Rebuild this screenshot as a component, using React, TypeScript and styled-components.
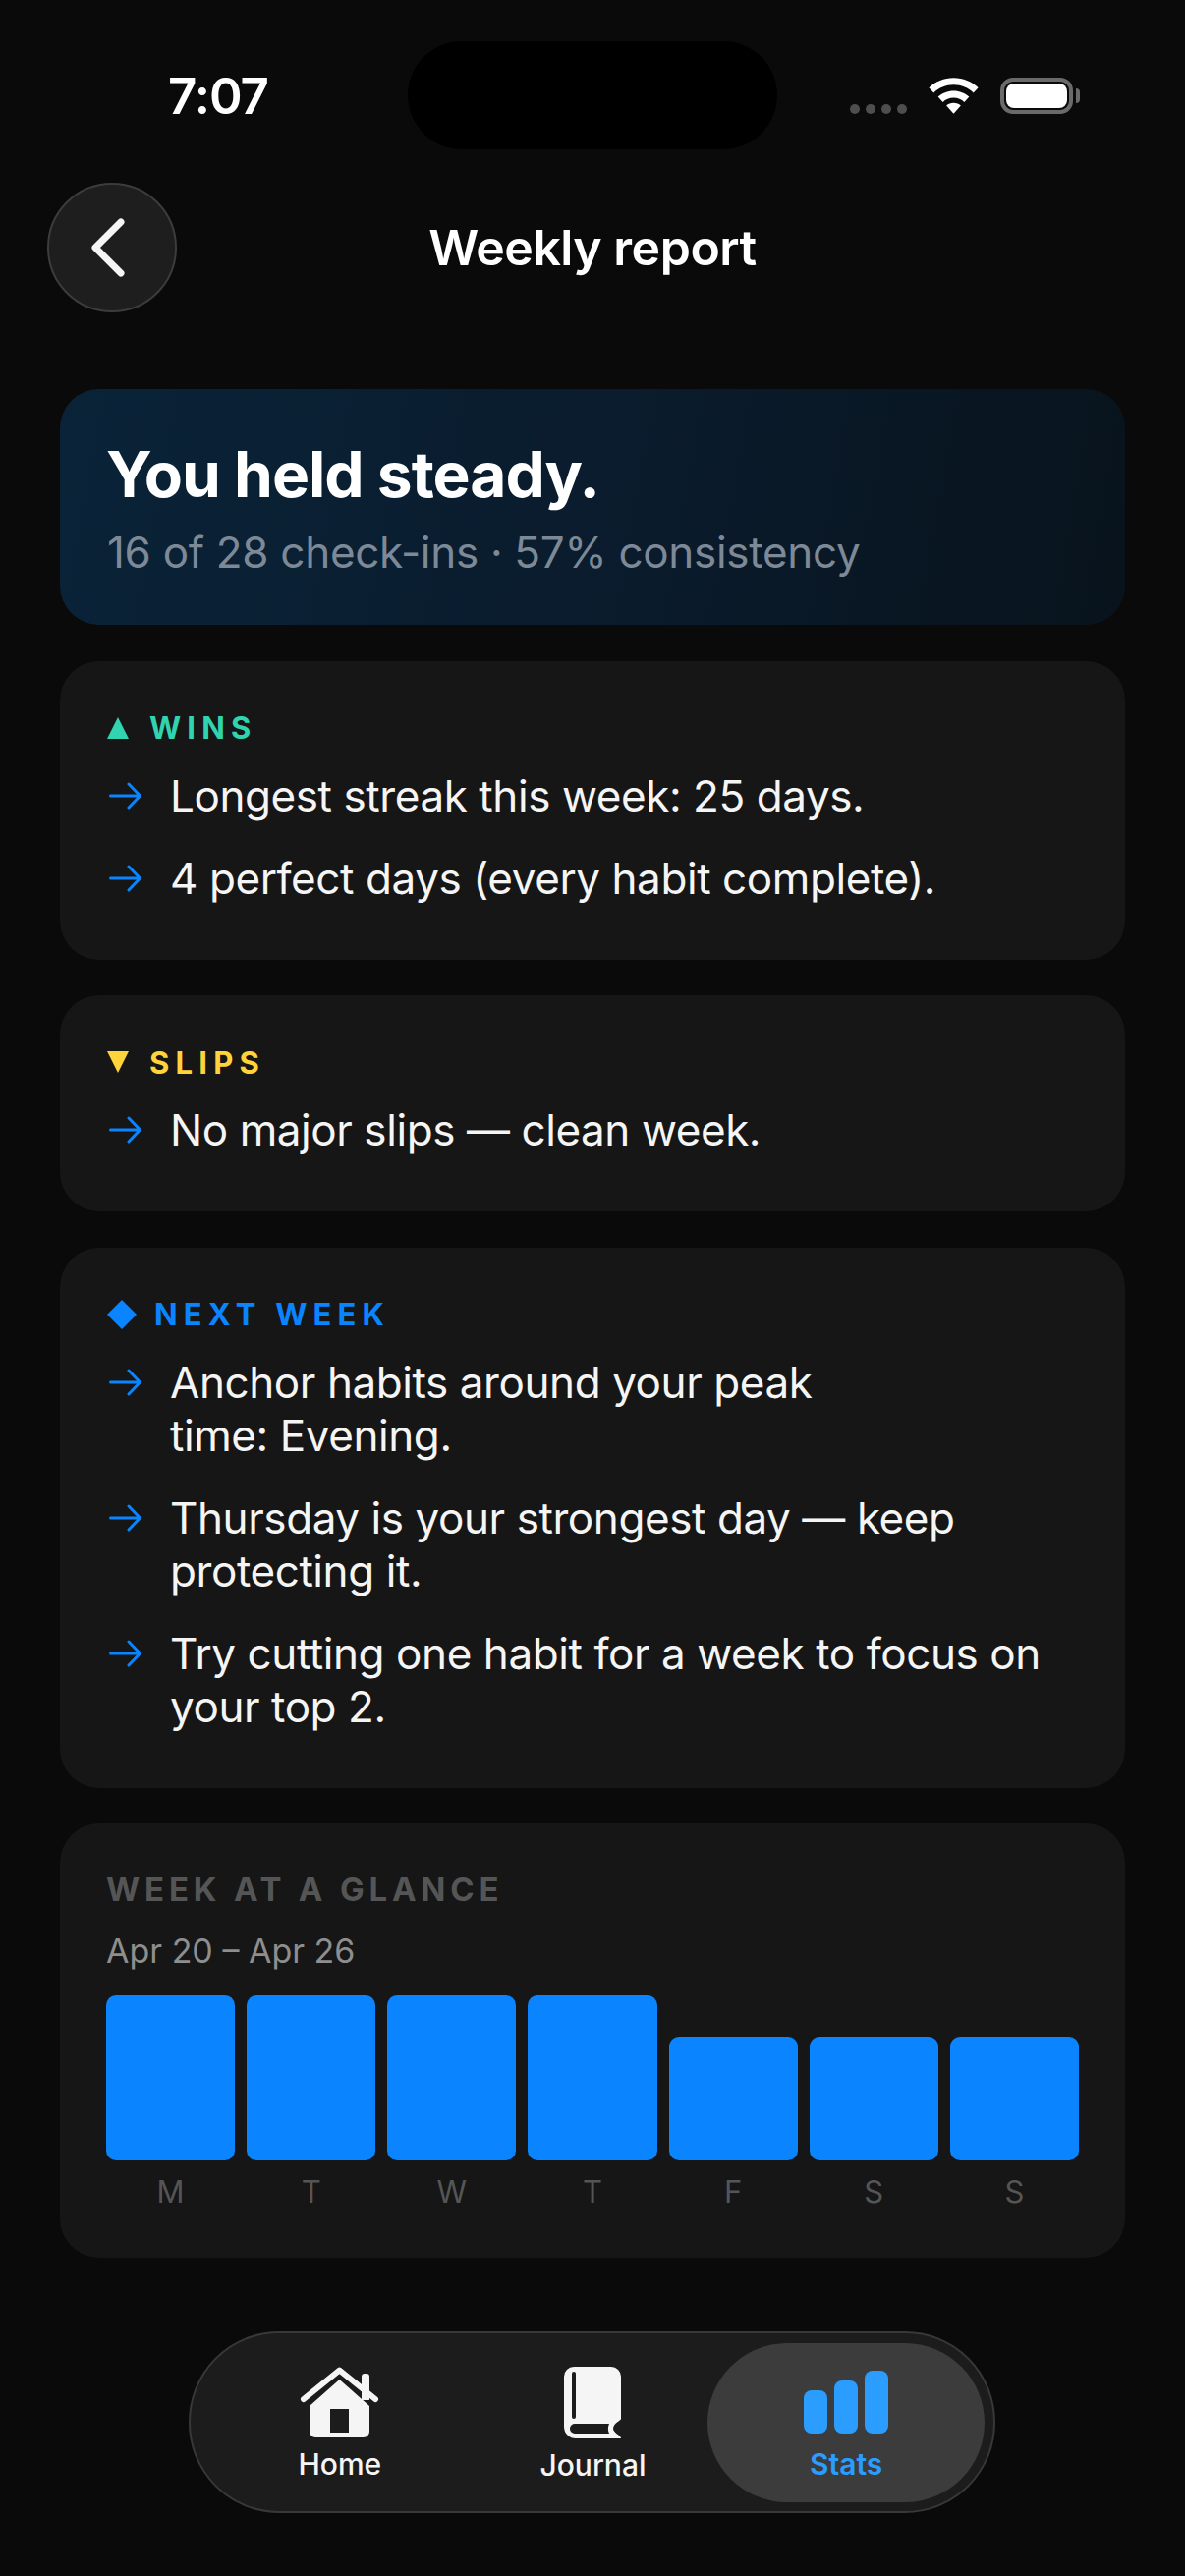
import React from "react";
import styled, { createGlobalStyle } from "styled-components";

const GlobalStyle = createGlobalStyle`
  html, body {
    margin: 0;
    padding: 0;
    background: #0a0a0a;
  }
  * {
    box-sizing: border-box;
  }
`;

const days = [
  { label: "M", height: 168 },
  { label: "T", height: 168 },
  { label: "W", height: 168 },
  { label: "T", height: 168 },
  { label: "F", height: 126 },
  { label: "S", height: 126 },
  { label: "S", height: 126 },
];

function Arrow() {
  return (
    <ArrowIcon viewBox="0 0 34 28" fill="none">
      <path
        d="M1.5 14H31M20 2l11.5 12L20 26"
        stroke="#0a84ff"
        strokeWidth="3"
        strokeLinecap="round"
        strokeLinejoin="round"
      />
    </ArrowIcon>
  );
}

function Bullet({ lines }: { lines: string[] }) {
  return (
    <Row>
      <Arrow />
      <RowText>
        {lines.map((line) => (
          <span key={line}>{line}</span>
        ))}
      </RowText>
    </Row>
  );
}

export default function App() {
  return (
    <Screen>
      <GlobalStyle />
      <StatusBar>
        <Time>7:07</Time>
        <Island />
        <StatusIcons>
          <Dots>
            <i />
            <i />
            <i />
            <i />
          </Dots>
          <svg width="51" height="37" viewBox="0 0 50 36">
            <path
              d="M25 0c9.500 0 18.200 3.700 24.600 9.800L44.800 15C39.600 10 32.700 7 25 7S10.400 10 5.200 15L.4 9.800C6.800 3.700 15.500 0 25 0z"
              fill="#fff"
            />
            <path
              d="M25 13c6 0 11.400 2.300 15.500 6.100l-4.800 5.200C33 21.700 29.200 20 25 20s-8 1.700-10.700 4.300l-4.800-5.200C13.600 15.300 19 13 25 13z"
              fill="#fff"
            />
            <path d="M25 25c2.800 0 5.300 1 7.200 2.700L25 36l-7.200-8.300C19.700 26 22.200 25 25 25z" fill="#fff" />
          </svg>
          <Battery>
            <BatteryFill />
          </Battery>
        </StatusIcons>
      </StatusBar>

      <Header>
        <BackButton>
          <svg width="36" height="60" viewBox="0 0 36 60" fill="none">
            <path
              d="M31 4L5 30l26 26"
              stroke="#f5f5f5"
              strokeWidth="7"
              strokeLinecap="round"
              strokeLinejoin="round"
            />
          </svg>
        </BackButton>
        <Title>Weekly report</Title>
      </Header>

      <Cards>
        <Hero>
          <HeroTitle>You held steady.</HeroTitle>
          <HeroSub>16 of 28 check-ins · 57% consistency</HeroSub>
        </Hero>

        <Card>
          <Label $color="#30d5b0" $gap={21}>
            <svg width="22" height="22" viewBox="0 0 22 22">
              <path d="M11 0l11 22H0z" fill="#30d5b0" />
            </svg>
            WINS
          </Label>
          <Rows>
            <Bullet lines={["Longest streak this week: 25 days."]} />
            <Bullet lines={["4 perfect days (every habit complete)."]} />
          </Rows>
        </Card>

        <Card>
          <Label $color="#ffd43b" $gap={21}>
            <svg width="22" height="22" viewBox="0 0 22 22">
              <path d="M0 0h22L11 22z" fill="#ffd43b" />
            </svg>
            SLIPS
          </Label>
          <Rows>
            <Bullet lines={["No major slips — clean week."]} />
          </Rows>
        </Card>

        <Card>
          <Label $color="#0a84ff" $gap={18}>
            <svg width="30" height="30" viewBox="0 0 28 28">
              <path d="M14 0l14 14-14 14L0 14z" fill="#0a84ff" />
            </svg>
            NEXT WEEK
          </Label>
          <Rows>
            <Bullet lines={["Anchor habits around your peak", "time: Evening."]} />
            <Bullet lines={["Thursday is your strongest day — keep", "protecting it."]} />
            <Bullet lines={["Try cutting one habit for a week to focus on", "your top 2."]} />
          </Rows>
        </Card>

        <GlanceCard>
          <GlanceTitle>WEEK AT A GLANCE</GlanceTitle>
          <DateRange>Apr 20 – Apr 26</DateRange>
          <Chart>
            {days.map((day, i) => (
              <Day key={i}>
                <BarSlot>
                  <Bar style={{ height: day.height }} />
                </BarSlot>
                <DayLabel>{day.label}</DayLabel>
              </Day>
            ))}
          </Chart>
        </GlanceCard>
      </Cards>

      <TabBar>
        <Tab>
          <svg width="81" height="72" viewBox="0 0 81 72">
            <path d="M63 10a3 3 0 0 1 3-3h2a3 3 0 0 1 3 3v24h-8z" fill="#f5f5f5" />
            <path d="M40.500 13L71 40v26a6 6 0 0 1-6 6H16a6 6 0 0 1-6-6V40z" fill="#f5f5f5" />
            <path
              d="M4 33L40.500 3.500 77 33"
              fill="none"
              stroke="#f5f5f5"
              strokeWidth="6"
              strokeLinecap="round"
              strokeLinejoin="round"
            />
            <path d="M31 43h19v24H31z" fill="#1c1c1c" />
          </svg>
          <TabLabel>Home</TabLabel>
        </Tab>
        <Tab>
          <svg width="58" height="73" viewBox="0 0 58 73">
            <path
              d="M10 0h38a10 10 0 0 1 10 10v43c0 2-8 4-8 10 0 4 8 7 8 10H12A12 12 0 0 1 0 61V10A10 10 0 0 1 10 0z"
              fill="#f5f5f5"
            />
            <path d="M10 5a2 2 0 0 1 2 2v44a2 2 0 0 1-4 0V7a2 2 0 0 1 2-2z" fill="#1c1c1c" />
            <path d="M11 58h35c-1.500 3-1.500 7 0 10H11a5 5 0 0 1 0-10z" fill="#1c1c1c" />
          </svg>
          <TabLabel>Journal</TabLabel>
        </Tab>
        <Tab $active>
          <StatsIcon>
            <StatsBar $height={44} />
            <StatsBar $height={54} />
            <StatsBar $height={64} />
          </StatsIcon>
          <TabLabel $active>Stats</TabLabel>
        </Tab>
      </TabBar>
    </Screen>
  );
}

const Screen = styled.div`
  width: 1206px;
  height: 2622px;
  overflow: hidden;
  background: #0a0a0a;
  color: #fff;
  font-family: Inter, "Liberation Sans", sans-serif;
`;

const StatusBar = styled.div`
  height: 110px;
  margin-top: 42px;
  display: flex;
  align-items: center;
`;

const Time = styled.div`
  width: 415px;
  padding-left: 171px;
  font-size: 51px;
  font-weight: 600;
  letter-spacing: -1px;
  color: #fff;
`;

const Island = styled.div`
  width: 376px;
  height: 110px;
  border-radius: 55px;
  background: #000;
`;

const StatusIcons = styled.div`
  margin-left: 74px;
  display: flex;
  align-items: center;
  gap: 22px;
`;

const Dots = styled.div`
  display: flex;
  gap: 6px;
  margin-top: 28px;

  i {
    width: 10px;
    height: 10px;
    border-radius: 50%;
    background: #4e4e4e;
  }
`;

const Battery = styled.div`
  width: 74px;
  height: 37px;
  border: 4px solid #6a6a6a;
  border-radius: 13px;
  padding: 2px;
  position: relative;

  &::after {
    content: "";
    position: absolute;
    right: -11px;
    top: 7px;
    width: 4px;
    height: 15px;
    border-radius: 0 4px 4px 0;
    background: #6a6a6a;
  }
`;

const BatteryFill = styled.div`
  width: 100%;
  height: 100%;
  background: #fff;
  border-radius: 8px;
`;

const Header = styled.div`
  height: 132px;
  margin-top: 34px;
  padding-left: 48px;
  display: flex;
  align-items: center;
`;

const BackButton = styled.div`
  width: 132px;
  height: 132px;
  border-radius: 50%;
  background: #1e1e1e;
  border: 2px solid #3c3c3c;
  display: flex;
  align-items: center;
  justify-content: center;
  padding-right: 9px;
`;

const Title = styled.div`
  flex: 1;
  margin-right: 180px;
  text-align: center;
  font-size: 50px;
  font-weight: 600;
  letter-spacing: -0.5px;
`;

const Cards = styled.div`
  margin-top: 78px;
  padding: 0 61px;
  display: flex;
  flex-direction: column;
  gap: 36.5px;
`;

const Hero = styled.div`
  height: 240px;
  padding: 51px 47px 0;
  border-radius: 40px;
  background: linear-gradient(100deg, #0a2338 0%, #0a1b2c 55%, #08131c 100%);
`;

const HeroTitle = styled.div`
  font-size: 64px;
  line-height: 72px;
  font-weight: 700;
  letter-spacing: -1px;
`;

const HeroSub = styled.div`
  margin-top: 16px;
  margin-left: 1px;
  font-size: 44px;
  line-height: 54px;
  letter-spacing: -0.3px;
  color: #7d8996;
`;

const Card = styled.div`
  padding: 48px 48px 56px;
  border-radius: 40px;
  background: #161616;
`;

const Label = styled.div<{ $color: string; $gap: number }>`
  display: flex;
  align-items: center;
  gap: ${(p) => p.$gap}px;
  height: 40px;
  font-size: 31px;
  font-weight: 700;
  letter-spacing: 6.2px;
  color: ${(p) => p.$color};
`;

const Rows = styled.div`
  margin-top: 22px;
  display: flex;
  flex-direction: column;
  gap: 30px;
`;

const Row = styled.div`
  display: flex;
  align-items: flex-start;
`;

const ArrowIcon = styled.svg`
  width: 34px;
  height: 28px;
  margin: 13px 28px 0 2px;
  flex-shrink: 0;
`;

const RowText = styled.div`
  font-size: 44px;
  line-height: 54px;
  letter-spacing: -0.42px;
  color: #f5f5f5;

  span {
    display: block;
    white-space: nowrap;
  }
`;

const GlanceCard = styled.div`
  height: 442px;
  padding: 47px 47px 0;
  border-radius: 40px;
  background: #161616;
`;

const GlanceTitle = styled.div`
  font-size: 33px;
  line-height: 40px;
  font-weight: 700;
  letter-spacing: 4.8px;
  color: #555;
`;

const DateRange = styled.div`
  margin-top: 23px;
  font-size: 34px;
  line-height: 40px;
  color: #8e8e8e;
`;

const Chart = styled.div`
  margin-top: 25px;
  display: grid;
  grid-template-columns: repeat(7, 1fr);
  gap: 12px;
`;

const Day = styled.div`
  display: flex;
  flex-direction: column;
  align-items: center;
`;

const BarSlot = styled.div`
  width: 100%;
  height: 168px;
  display: flex;
  align-items: flex-end;
`;

const Bar = styled.div`
  width: 100%;
  border-radius: 10px;
  background: #0a84ff;
`;

const DayLabel = styled.div`
  margin-top: 13px;
  font-size: 31px;
  line-height: 38px;
  color: #555;
`;

const TabBar = styled.div`
  width: 821px;
  height: 185px;
  margin: 75px 0 0 192px;
  padding: 0 21px 0 23px;
  border-radius: 92px;
  background: #1c1c1c;
  border: 2px solid #383838;
  display: grid;
  grid-template-columns: repeat(3, 1fr);
`;

const Tab = styled.div<{ $active?: boolean }>`
  position: relative;
  display: flex;
  flex-direction: column;
  align-items: center;
  justify-content: flex-start;
  padding-top: 34px;

  ${(p) =>
    p.$active &&
    `
    &::before {
      content: "";
      position: absolute;
      top: 10px;
      bottom: 9px;
      left: -12px;
      right: -12px;
      border-radius: 82px;
      background: #3c3c3c;
    }
  `}

  svg {
    position: relative;
  }
`;

const TabLabel = styled.div<{ $active?: boolean }>`
  position: relative;
  margin-top: 9px;
  font-size: 30px;
  line-height: 36px;
  font-weight: ${(p) => (p.$active ? 600 : 500)};
  color: ${(p) => (p.$active ? "#2a9dff" : "#f5f5f5")};
`;

const StatsIcon = styled.div`
  position: relative;
  height: 72px;
  padding-bottom: 4px;
  display: flex;
  align-items: flex-end;
  gap: 7px;
`;

const StatsBar = styled.div<{ $height: number }>`
  width: 24px;
  height: ${(p) => p.$height}px;
  border-radius: 8px;
  background: #2a9dff;
`;
